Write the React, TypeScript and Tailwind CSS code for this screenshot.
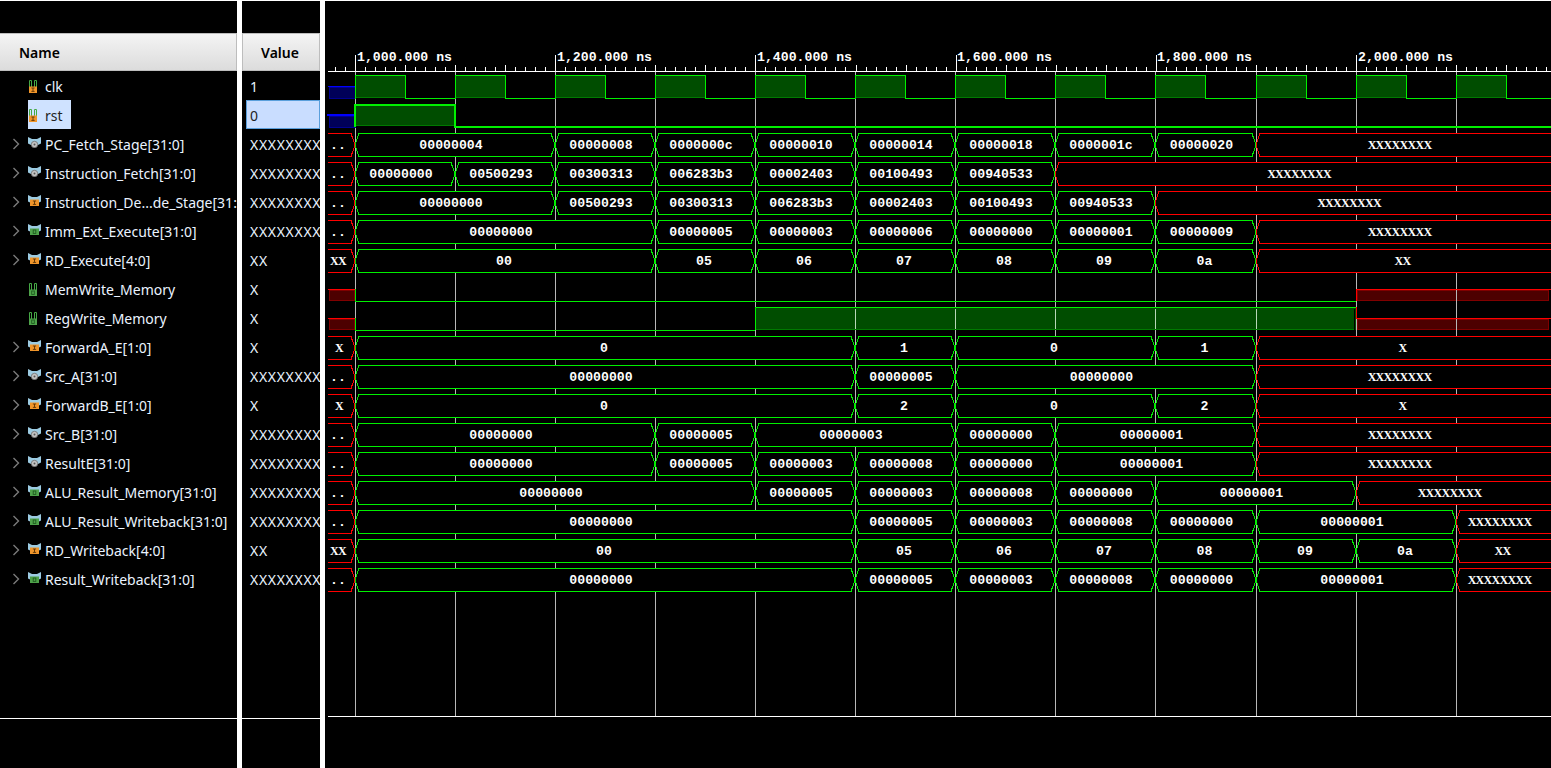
import React from "react";

type Kind = "orange" | "grey" | "green";
type Sig = { name: string; value: string; icon: "bit" | "bus"; kind: Kind; selected?: boolean };

const signals: Sig[] = [
  { name: "clk", value: "1", icon: "bit", kind: "orange" },
  { name: "rst", value: "0", icon: "bit", kind: "orange", selected: true },
  { name: "PC_Fetch_Stage[31:0]", value: "XXXXXXXX", icon: "bus", kind: "grey" },
  { name: "Instruction_Fetch[31:0]", value: "XXXXXXXX", icon: "bus", kind: "grey" },
  { name: "Instruction_De...de_Stage[31:0]", value: "XXXXXXXX", icon: "bus", kind: "orange" },
  { name: "Imm_Ext_Execute[31:0]", value: "XXXXXXXX", icon: "bus", kind: "green" },
  { name: "RD_Execute[4:0]", value: "XX", icon: "bus", kind: "orange" },
  { name: "MemWrite_Memory", value: "X", icon: "bit", kind: "green" },
  { name: "RegWrite_Memory", value: "X", icon: "bit", kind: "green" },
  { name: "ForwardA_E[1:0]", value: "X", icon: "bus", kind: "orange" },
  { name: "Src_A[31:0]", value: "XXXXXXXX", icon: "bus", kind: "grey" },
  { name: "ForwardB_E[1:0]", value: "X", icon: "bus", kind: "orange" },
  { name: "Src_B[31:0]", value: "XXXXXXXX", icon: "bus", kind: "grey" },
  { name: "ResultE[31:0]", value: "XXXXXXXX", icon: "bus", kind: "grey" },
  { name: "ALU_Result_Memory[31:0]", value: "XXXXXXXX", icon: "bus", kind: "green" },
  { name: "ALU_Result_Writeback[31:0]", value: "XXXXXXXX", icon: "bus", kind: "green" },
  { name: "RD_Writeback[4:0]", value: "XX", icon: "bus", kind: "orange" },
  { name: "Result_Writeback[31:0]", value: "XXXXXXXX", icon: "bus", kind: "green" },
];

const T = [355, 455, 555, 655, 755, 855, 955, 1055, 1155, 1256, 1356, 1456];
const END = 1551;
const GREEN = "#00f000";
const RED = "#ff0000";
const X8 = "XXXXXXXX";
const h = (n: number) => n.toString(16).padStart(8, "0");

type Seg = [string, number];
const buses: [number, string, Seg[]][] = [
  [2, "..", [[h(4), 0], [h(8), 2], [h(12), 3], [h(16), 4], [h(20), 5], [h(24), 6], [h(28), 7], [h(32), 8], [X8, 9]]],
  [3, "..", [["00000000", 0], ["00500293", 1], ["00300313", 2], ["006283b3", 3], ["00002403", 4], ["00100493", 5], ["00940533", 6], [X8, 7]]],
  [4, "..", [["00000000", 0], ["00500293", 2], ["00300313", 3], ["006283b3", 4], ["00002403", 5], ["00100493", 6], ["00940533", 7], [X8, 8]]],
  [5, "..", [[h(0), 0], [h(5), 3], [h(3), 4], [h(6), 5], [h(0), 6], [h(1), 7], [h(9), 8], [X8, 9]]],
  [6, "XX", [["00", 0], ["05", 3], ["06", 4], ["07", 5], ["08", 6], ["09", 7], ["0a", 8], ["XX", 9]]],
  [9, "X", [["0", 0], ["1", 5], ["0", 6], ["1", 8], ["X", 9]]],
  [10, "..", [[h(0), 0], [h(5), 5], [h(0), 6], [X8, 9]]],
  [11, "X", [["0", 0], ["2", 5], ["0", 6], ["2", 8], ["X", 9]]],
  [12, "..", [[h(0), 0], [h(5), 3], [h(3), 4], [h(0), 6], [h(1), 7], [X8, 9]]],
  [13, "..", [[h(0), 0], [h(5), 3], [h(3), 4], [h(8), 5], [h(0), 6], [h(1), 7], [X8, 9]]],
  [14, "..", [[h(0), 0], [h(5), 4], [h(3), 5], [h(8), 6], [h(0), 7], [h(1), 8], [X8, 10]]],
  [15, "..", [[h(0), 0], [h(5), 5], [h(3), 6], [h(8), 7], [h(0), 8], [h(1), 9], [X8, 11]]],
  [16, "XX", [["00", 0], ["05", 5], ["06", 6], ["07", 7], ["08", 8], ["09", 9], ["0a", 10], ["XX", 11]]],
  [17, "..", [[h(0), 0], [h(5), 5], [h(3), 6], [h(8), 7], [h(0), 8], [h(1), 9], [X8, 11]]],
];

const cy = (i: number) => 87 + 29 * i;
const waveText = "font-['Liberation_Mono'] font-bold text-[13.2px]";
const xText = "font-['Liberation_Serif'] font-bold text-[12px] tracking-[-0.7px]";
const textClass = (v: string) => (v[0] === "X" ? xText : waveText);

function Glyph({ kind, x, y, w }: { kind: Kind; x: number; y: number; w: number }) {
  if (kind === "grey") {
    return (
      <g>
        <circle cx={x + w / 2} cy={y + 3} r={3.2} fill="#c4c4c4" stroke="#6b6b6b" strokeWidth={0.8} />
        <circle cx={x + w / 2} cy={y + 3} r={1} fill="#555" />
      </g>
    );
  }
  const fill = kind === "orange" ? "#f0952a" : "#4ea24a";
  const ink = kind === "orange" ? "#5a3205" : "#1e5a1e";
  const m = x + w / 2;
  return (
    <g>
      <rect x={x} y={y} width={w} height={6.5} fill={fill} />
      {kind === "orange" ? (
        <path d={`M${m - 1.6} ${y + 1.5}h3.2M${m} ${y + 1.5}v3.4M${m - 1.6} ${y + 4.9}h3.2`} stroke={ink} strokeWidth={0.9} fill="none" />
      ) : (
        <rect x={m - 1.3} y={y + 1.5} width={2.6} height={3.4} fill="none" stroke={ink} strokeWidth={0.9} />
      )}
    </g>
  );
}

function SigIcon({ icon, kind }: { icon: "bit" | "bus"; kind: Kind }) {
  if (icon === "bus") {
    return (
      <svg width="13" height="11" viewBox="0 0 13 11" className="block -translate-y-[1px]">
        <path d="M0 0L4 2H9L13 0V6.5L10 8H3L0 6.5Z" fill="#9ccbe2" />
        <Glyph kind={kind} x={2} y={4.5} w={9} />
      </svg>
    );
  }
  return (
    <svg width="13" height="14" viewBox="0 0 13 14" className="block">
      <path d="M1.5 8V1.5H3.5V8M6.5 8V1.5H8.5V8" fill="none" stroke="#45a845" strokeWidth={1} />
      <Glyph kind={kind} x={1} y={7.5} w={8} />
    </svg>
  );
}

function Chevron() {
  return (
    <svg width="8" height="12" viewBox="0 0 8 12" className="block">
      <path d="M1.5 1L6.5 6L1.5 11" fill="none" stroke="#7a7a7a" strokeWidth={1.4} />
    </svg>
  );
}

function BusRow({ row, left, segs }: { row: number; left: string; segs: Seg[] }) {
  const c = cy(row);
  const t = c - 11.5;
  const b = c + 11.5;
  return (
    <g shapeRendering="crispEdges">
      <path d={`M328 ${t}H351L355 ${c}L351 ${b}H328`} fill="#000" stroke={RED} />
      <text x={left === "X" ? 339 : 338} y={c + 4} textAnchor="middle" fill="#fff" className={textClass(left)}>
        {left}
      </text>
      {segs.map(([v, s], k) => {
        const a = T[s];
        const isEnd = k === segs.length - 1;
        const e = isEnd ? END : T[segs[k + 1][1]];
        const col = v[0] === "X" ? RED : GREEN;
        const d = isEnd
          ? `M${END} ${t}H${a + 4}L${a} ${c}L${a + 4} ${b}H${END}`
          : `M${a + 4} ${t}H${e - 4}L${e} ${c}L${e - 4} ${b}H${a + 4}L${a} ${c}Z`;
        const off = v.length === 8 ? -4 : -1;
        return (
          <g key={k}>
            <path d={d} fill="#000" stroke={col} />
            <text x={(a + e) / 2 + off} y={c + 4} textAnchor="middle" fill="#fff" className={textClass(v)}>
              {v}
            </text>
          </g>
        );
      })}
    </g>
  );
}

function Waves() {
  const ticks: number[] = [];
  for (let i = -2; i * 10.01 + 355 < END; i++) ticks.push(i);
  const labels: [string, number][] = [
    ["1,000.000 ns", 357],
    ["1,200.000 ns", 557],
    ["1,400.000 ns", 757],
    ["1,600.000 ns", 957],
    ["1,800.000 ns", 1157],
    ["2,000.000 ns", 1358],
  ];
  return (
    <svg width={1226} height={767} viewBox="325 1 1226 767" className="block">
      <g shapeRendering="crispEdges">
        {T.map((x) => (
          <line key={x} x1={x + 0.5} x2={x + 0.5} y1={72} y2={716} stroke="#b8b8b8" />
        ))}
        <line x1={328} x2={END} y1={71.5} y2={71.5} stroke="#fff" />
        <line x1={328} x2={END} y1={716.5} y2={716.5} stroke="#fff" />
        {ticks.map((i) => {
          const x = Math.round(355 + i * 10.01) + 0.5;
          const top = i % 20 === 0 ? 55 : i % 5 === 0 ? 65 : 67;
          return <line key={i} x1={x} x2={x} y1={top} y2={71} stroke="#fff" />;
        })}
      </g>
      {labels.map(([s, x]) => (
        <text key={s} x={x} y={61} fill="#fff" className={waveText}>
          {s}
        </text>
      ))}

      {/* clk */}
      <g shapeRendering="crispEdges">
        <rect x={329} y={87} width={26} height={11} fill="#000058" stroke="#000090" />
        <line x1={328} x2={355} y1={86.5} y2={86.5} stroke="#0000ff" />
        <path
          d={"M355 98.5" + T.map((x) => `H${x + 0.5}V75.5H${x + 50.5}V98.5`).join("") + `H${END}`}
          fill="none"
          stroke={GREEN}
        />
        {T.map((x) => (
          <g key={x}>
            <rect x={x + 1} y={76} width={49} height={22} fill="#004d00" />
            <line x1={x + 1} x2={x + 50} y1={97.5} y2={97.5} stroke="#007a00" />
            <line x1={x + 0.5} x2={x + 0.5} y1={76} y2={98} stroke={GREEN} />
          </g>
        ))}
      </g>

      {/* rst */}
      <g shapeRendering="crispEdges">
        <rect x={329} y={116} width={26} height={11} fill="#000058" stroke="#000090" />
        <rect x={327} y={114} width={28} height={2} fill="#0000ff" />
        <rect x={356} y={106} width={98} height={20} fill="#004d00" />
        <line x1={356} x2={454} y1={125.5} y2={125.5} stroke="#007a00" />
        <path d={`M355 127V105H455V127H${END}`} fill="none" stroke={GREEN} strokeWidth={2} />
      </g>

      {/* MemWrite */}
      <g shapeRendering="crispEdges">
        <rect x={329.5} y={290.5} width={25} height={10} fill="#4d0000" stroke="#800000" />
        <line x1={328} x2={355} y1={289.5} y2={289.5} stroke={RED} />
        <line x1={355} x2={1356} y1={301.5} y2={301.5} stroke={GREEN} />
        <line x1={355.5} x2={355.5} y1={289} y2={302} stroke={GREEN} />
        <rect x={1357.5} y={290.5} width={191} height={10} fill="#4d0000" stroke="#800000" />
        <path d={`M1356.5 301V289.5H${END}`} fill="none" stroke={RED} />
      </g>

      {/* RegWrite */}
      <g shapeRendering="crispEdges">
        <rect x={329.5} y={319.5} width={25} height={10} fill="#4d0000" stroke="#800000" />
        <line x1={328} x2={355} y1={318.5} y2={318.5} stroke={RED} />
        <line x1={355.5} x2={355.5} y1={318} y2={331} stroke={GREEN} />
        <line x1={355} x2={755} y1={330.5} y2={330.5} stroke={GREEN} />
        <rect x={756} y={308} width={600} height={22} fill="#004d00" />
        <line x1={756} x2={1355} y1={329.5} y2={329.5} stroke="#007a00" />
        <line x1={1354.5} x2={1354.5} y1={309} y2={330} stroke="#000" />
        <path d="M755.5 330V307.5H1356" fill="none" stroke={GREEN} />
        <rect x={1357.5} y={319.5} width={191} height={10} fill="#4d0000" stroke="#800000" />
        <path d={`M1356.5 307V318.5H${END}`} fill="none" stroke={RED} />
      </g>
      <g shapeRendering="crispEdges">
        <line x1={855.5} x2={855.5} y1={309} y2={329} stroke="#b8d8b8" />
        <line x1={955.5} x2={955.5} y1={309} y2={329} stroke="#b8d8b8" />
        <line x1={1055.5} x2={1055.5} y1={309} y2={329} stroke="#b8d8b8" />
        <line x1={1155.5} x2={1155.5} y1={309} y2={329} stroke="#b8d8b8" />
        <line x1={1256.5} x2={1256.5} y1={309} y2={329} stroke="#b8d8b8" />
        <line x1={1456.5} x2={1456.5} y1={290} y2={301} stroke="#b8b8b8" />
        <line x1={1456.5} x2={1456.5} y1={319} y2={330} stroke="#b8b8b8" />
      </g>

      {buses.map(([r, l, s]) => (
        <BusRow key={r} row={r} left={l} segs={s} />
      ))}
    </svg>
  );
}

export default function App() {
  return (
    <div className="flex h-[768px] w-[1551px] overflow-hidden border-t border-white bg-black font-['Noto_Sans',sans-serif] text-[14px] text-[#eaf3ff]">
      {/* Name column */}
      <div className="flex w-[237px] flex-col">
        <div className="h-[32px]" />
        <div className="flex h-[38px] items-center border border-l-0 border-[#bdbdbd] bg-gradient-to-b from-[#f4f4f4] to-[#dcdcdc] pl-[19px] font-semibold text-black">
          Name
        </div>
        <div className="h-[648px] border-b border-white">
          {signals.map((s) => (
            <div key={s.name} className="flex h-[29px] items-center overflow-hidden whitespace-nowrap pl-[12px]">
              <div className="flex w-[16px] shrink-0 items-center">{s.icon === "bus" && <Chevron />}</div>
              <div className={`flex h-full items-center ${s.selected ? "bg-[#cfe2ff] pr-[8px] text-[#222]" : "pr-[4px]"}`}>
                <div className="w-[17px] shrink-0">
                  <SigIcon icon={s.icon} kind={s.kind} />
                </div>
                <span className="pt-[2px]">{s.name}</span>
              </div>
            </div>
          ))}
        </div>
      </div>
      <div className="w-[5px] bg-white" />
      {/* Value column */}
      <div className="flex w-[78px] flex-col">
        <div className="h-[32px]" />
        <div className="flex h-[38px] items-center justify-center border border-[#bdbdbd] bg-gradient-to-b from-[#f4f4f4] to-[#dcdcdc] pr-[2px] font-semibold text-black">
          Value
        </div>
        <div className="h-[648px] border-b border-white">
          {signals.map((s) => (
            <div
              key={s.name}
              className={`flex h-[29px] items-center overflow-hidden whitespace-nowrap tracking-[0.7px] ${s.selected ? "pl-[4px]" : "pl-[8px]"}`}
            >
              {s.selected ? (
                <div className="flex h-full w-full items-center border border-[#5a9fdc] bg-[#c9ddff] pl-[3px] pt-[2px] text-[#222]">
                  {s.value}
                </div>
              ) : (
                <span className="pt-[2px]">{s.value}</span>
              )}
            </div>
          ))}
        </div>
      </div>
      <div className="w-[5px] bg-white" />
      {/* Wave view */}
      <div className="flex-1">
        <Waves />
      </div>
    </div>
  );
}
